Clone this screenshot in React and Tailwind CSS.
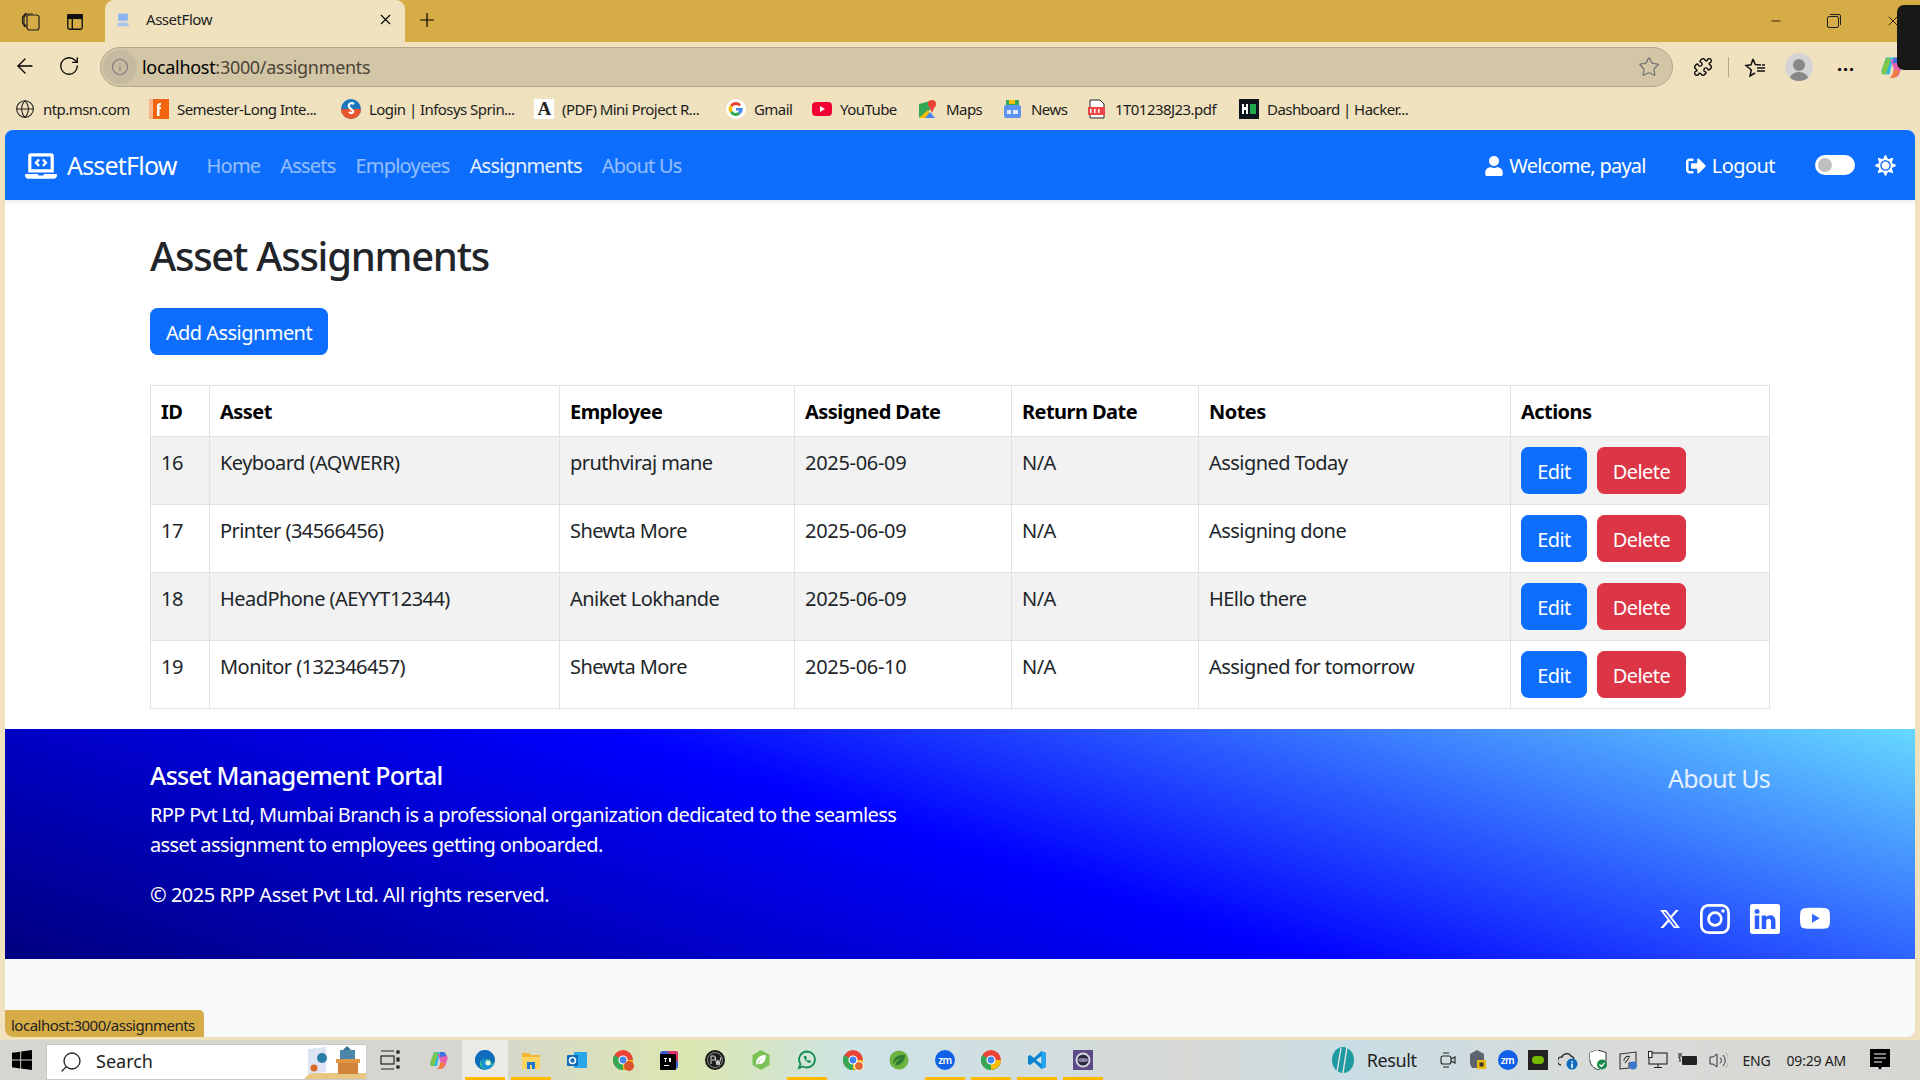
import React from 'react';
import { ArrowLeft, RotateCw, Info, Star, Puzzle, Plus, X, Minus, Search, Globe } from 'lucide-react';
import { FaUser, FaSignOutAlt, FaSun, FaLaptopCode } from 'react-icons/fa';
import { BsTwitterX, BsInstagram, BsLinkedin, BsYoutube, BsWindows } from 'react-icons/bs';

const rows = [
  { id: 16, asset: 'Keyboard (AQWERR)', employee: 'pruthviraj mane', date: '2025-06-09', notes: 'Assigned Today' },
  { id: 17, asset: 'Printer (34566456)', employee: 'Shewta More', date: '2025-06-09', notes: 'Assigning done' },
  { id: 18, asset: 'HeadPhone (AEYYT12344)', employee: 'Aniket Lokhande', date: '2025-06-09', notes: 'HEllo there' },
  { id: 19, asset: 'Monitor (132346457)', employee: 'Shewta More', date: '2025-06-10', notes: 'Assigned for tomorrow' },
];

const Ic = ({ children, className = 'w-5 h-5' }) => (
  <svg viewBox="0 0 20 20" className={`${className} shrink-0`}>{children}</svg>
);

const Chrome = ({ className }) => (
  <Ic className={className}>
    <circle cx="10" cy="10" r="10" fill="#ea4335" />
    <path d="M10 10 1.300 15A10 10 0 0 1 1.300 5Z" fill="#34a853" />
    <path d="M10 10 1.300 15A10 10 0 0 0 18.700 15Z" fill="#34a853" />
    <path d="M10 10 20 10A10 10 0 0 1 10 20L10 10Z" fill="#fbbc04" />
    <circle cx="10" cy="10" r="4.600" fill="#fff" />
    <circle cx="10" cy="10" r="3.400" fill="#4285f4" />
  </Ic>
);

const CopilotIcon = ({ className }) => (
  <Ic className={className}>
    <path d="M5 2h6l-3 14H3C1 16 1 14 1.500 12Z" fill="#2fb5e8" />
    <path d="M1.500 12C3 8 4 3 7 2c2 0 2 2 1 5l-3 9H3C1 16 1 14 1.500 12Z" fill="#7cc84a" />
    <path d="M9 4h6c3 0 4 3 3.500 5L16 16c-1 2-3 3-5 3H8c2-1 3-4 3.500-7Z" fill="#e45fae" />
    <path d="M11 2h3c2 0 3 2 3 4l-6 1Z" fill="#3f6fe0" />
    <path d="M8 19c2-1 3-4 4-7l4 1c-1 4-3 6-5 6Z" fill="#f2803a" />
  </Ic>
);

const bookmarks = [
  { label: 'ntp.msn.com', w: 'w-[134px]', icon: <Globe className="w-5 h-5 text-[#222]" strokeWidth={1.3} /> },
  {
    label: 'Semester-Long Inte...', w: 'w-[192px]',
    icon: <Ic><rect width="20" height="20" fill="#f4640f" /><rect width="4" height="20" fill="#f9b58c" /><path d="M8 17V7c0-2 1-3 4-3v2c-1 0-1.500 0-1.500 1v1H12v2h-1.500v7Z" fill="#fff" /></Ic>,
  },
  {
    label: 'Login | Infosys Sprin...', w: 'w-[193px]',
    icon: <Ic><circle cx="10" cy="10" r="10" fill="#1b76bc" /><path d="M0 10a10 10 0 0 0 20 0Z" fill="#e9552b" /><path d="M13 5c-3-2-6 0-5 3l4 4c1 2-2 3-4 1" fill="none" stroke="#fff" strokeWidth="2.200" /></Ic>,
  },
  {
    label: '(PDF) Mini Project R...', w: 'w-[192px]',
    icon: <span className="w-5 h-5 bg-white flex items-center justify-center font-['Liberation_Serif',serif] font-bold text-[19px] text-[#222] shrink-0">A</span>,
  },
  {
    label: 'Gmail', w: 'w-[86px]',
    icon: <Ic><circle cx="10" cy="10" r="10" fill="#fff" /><path d="M15 5.500A7 7 0 0 0 4 6l2.500 2A4 4 0 0 1 13 7.500Z" fill="#ea4335" /><path d="M4 6a7 7 0 0 0 0 8l2.500-2a4 4 0 0 1 0-4Z" fill="#fbbc04" /><path d="M4 14a7 7 0 0 0 10.500 1L12 13a4 4 0 0 1-5.500-1Z" fill="#34a853" /><path d="M16.500 9H10v2.500h3.500A4 4 0 0 1 12 13l2.500 2c2-2 2.500-4 2-6Z" fill="#4285f4" /></Ic>,
  },
  {
    label: 'YouTube', w: 'w-[106px]',
    icon: <Ic><rect y="3" width="20" height="14" rx="4" fill="#f00033" /><path d="M8 7v6l5-3Z" fill="#fff" /></Ic>,
  },
  {
    label: 'Maps', w: 'w-[85px]',
    icon: <Ic><path d="M1 5l11-3v9L1 19Z" fill="#34a853" /><path d="M1 19l9-8 6 8Z" fill="#fbbc04" /><path d="M7 19l5-6 5 6Z" fill="#4285f4" /><circle cx="14" cy="5" r="4" fill="#ea4335" /><path d="M11 7l3 7 3-7Z" fill="#ea4335" /></Ic>,
  },
  {
    label: 'News', w: 'w-[84px]',
    icon: <Ic><rect x="3" y="1" width="13" height="8" rx="1" fill="#34a853" /><rect x="6" y="1" width="6" height="4" fill="#fbbc04" /><rect x="1" y="6" width="17" height="13" rx="2" fill="#5b93ee" /><rect x="4" y="11" width="4" height="4" fill="#dfe9fb" /><rect x="10" y="11" width="5" height="4" fill="#dfe9fb" /></Ic>,
  },
  {
    label: '1T01238J23.pdf', w: 'w-[152px]',
    icon: <Ic><path d="M3 1h10l4 4v14H3Z" fill="#fff" stroke="#222" strokeWidth="1" /><rect x="1" y="8" width="17" height="8" fill="#ef4444" /><path d="M3 14v-4h1.500v4Zm4 0v-4h1.500v4Zm4 0v-4h1.500v4Z" fill="#fff" /></Ic>,
  },
  {
    label: 'Dashboard | Hacker...', w: 'w-[170px]',
    icon: <Ic><rect width="20" height="20" fill="#0e141e" /><path d="M3 5h2v3h2V5h2v10H7v-4H5v4H3Z" fill="#fff" /><rect x="11" y="5" width="6" height="10" fill="#1ba94c" /></Ic>,
  },
];

const taskIcons = [
  { icon: <CopilotIcon className="w-5 h-5" /> },
  {
    on: true, active: true,
    icon: <Ic><circle cx="10" cy="10" r="10" fill="#1a8fd8" /><path d="M20 10c0 3-2 5-5 5-4 0-6-3-4-5 1-1 3-1 3 0-1-3-7-3-8 1C5 16 9 20 13 19.500 4 19 0 13 2 7" fill="#3ad06e" /><path d="M5 12c1-3 5-4 8-3 3 1 4 3 3 5 2 0 4-2 4-4C20 5 15 0 10 0 4 0 0 5 0 10c0 6 6 10 11 10-4-1-7-4-6-8Z" fill="#0f6cbd" /><circle cx="13" cy="13" r="2.500" fill="#eef2ee" /></Ic>,
  },
  {
    on: true,
    icon: <Ic><path d="M1 3h7l2 2h9v5H1Z" fill="#f3b72f" /><rect x="1" y="7" width="18" height="12" fill="#fcd462" /><path d="M6 19v-7h8v7h-3v-4H9v4Z" fill="#1b78d0" /></Ic>,
  },
  {
    icon: <Ic><rect x="7" y="2" width="13" height="16" rx="1" fill="#28a8ea" /><rect x="0" y="5" width="11" height="11" rx="1" fill="#0f6cbd" /><circle cx="5.500" cy="10.500" r="3" fill="none" stroke="#fff" strokeWidth="1.600" /></Ic>,
  },
  {
    icon: <span className="relative"><Chrome className="w-5 h-5" /><span className="absolute -right-px -bottom-px w-2.5 h-2.5 rounded-full bg-[#d9542b]" /></span>,
  },
  {
    icon: <Ic><rect x="1" y="1" width="18" height="18" rx="3" fill="#3b5bd9" /><path d="M8 1h9a2 2 0 0 1 2 2v9Z" fill="#e0306f" /><rect x="1" y="4" width="16" height="16" rx="1" fill="#000" /><path d="M5 8h3v1H7v3H6V9H5Zm5 0h2v4h-2ZM5 15h5v1H5Z" fill="#fff" /></Ic>,
  },
  {
    icon: <Ic><circle cx="10" cy="10" r="10" fill="#1a1a1a" /><circle cx="10" cy="10" r="7.500" fill="none" stroke="#aaa" strokeWidth=".8" /><path d="M6 14V6h3c2 0 2 4 0 4H7m3-3 2 8 1-5 1 5 2-8" fill="none" stroke="#ddd" strokeWidth="1" /></Ic>,
  },
  {
    icon: <Ic><path d="M10 0l8.500 5v10L10 20l-8.500-5V5Z" fill="#79c257" /><path d="M5 14C5 8 9 5 15 5c0 6-3 10-8 9 1-3 3-5 5-6-3 1-5 3-6 7Z" fill="#fff" /></Ic>,
  },
  {
    on: true,
    icon: <Ic><path d="M10 1.500a8 8 0 0 1 0 16c-1.500 0-3-.4-4-1l-4 1.500 1.500-4a8 8 0 0 1 6.500-12.500Z" fill="none" stroke="#128c4f" strokeWidth="1.800" /><path d="M7 6c-1 2 3 7 6 7l1-2-2-1-1 1-2-2 1-1-1-2Z" fill="#128c4f" /></Ic>,
  },
  {
    icon: <span className="relative"><Chrome className="w-5 h-5" /><span className="absolute -right-px -bottom-px w-2.5 h-2.5 rounded-full bg-[#e2682f] border border-white" /></span>,
  },
  {
    icon: <Ic><circle cx="10" cy="10" r="9.500" fill="#6db33f" /><path d="M4 14C4 8 9 4 16 5c0 6-4 11-10 10 1-3 3-5 6-7-3 1-6 3-8 6Z" fill="#2f7d32" /></Ic>,
  },
  {
    on: true,
    icon: <span className="w-5 h-5 rounded-full bg-[#1160e8] text-white text-[10px] font-semibold flex items-center justify-center">zm</span>,
  },
  { on: true, icon: <Chrome className="w-5 h-5" /> },
  {
    on: true,
    icon: <Ic><path d="M14.500 1 7 8 3 5 1 6v8l2 1 4-3 7.500 7L19 17V3Z" fill="#0a84d0" /><path d="M14.500 6v8L9 10Z" fill="#d6e6ea" /><path d="M14.500 1 19 3v14l-4.500 2Z" fill="#24a6ec" /></Ic>,
  },
  {
    on: true,
    icon: <Ic><rect width="20" height="20" fill="#5c4a86" /><circle cx="10" cy="10" r="7.500" fill="#d8d4e0" /><circle cx="10" cy="10" r="5.500" fill="#2a2a3c" /><ellipse cx="10" cy="10" rx="5" ry="2" fill="#8a84a8" /></Ic>,
  },
];

const trayIcons = [
  <svg key="cam" viewBox="0 0 20 20" className="w-5 h-5" fill="none" stroke="#222" strokeWidth="1.100"><rect x="3" y="6" width="10" height="8" rx="2" /><path d="M13 9l4-2v6l-4-2M5 3h6M5 17h6" /></svg>,
  <svg key="chip" viewBox="0 0 20 20" className="w-5 h-5"><path d="M9 0l7 4v6l-3 8H4l-2-4V4Z" fill="#5d6470" /><rect x="9" y="10" width="9" height="9" fill="#e8b90c" /><rect x="11.500" y="12.500" width="4" height="4" fill="#333" /></svg>,
  <span key="zm" className="w-5 h-5 rounded-full bg-[#1160e8] text-white text-[10px] font-semibold flex items-center justify-center">zm</span>,
  <span key="nv" className="w-5 h-5 bg-[#222] flex items-center justify-center"><span className="w-3 h-2 rounded-full bg-[#76b900]" /></span>,
  <svg key="cloud" viewBox="0 0 20 20" className="w-5 h-5"><path d="M3 15a4 4 0 0 1 1-8 5 5 0 0 1 9-1 4 4 0 0 1 3 3" fill="#d8d8d8" stroke="#333" strokeWidth="1.500" /><circle cx="14" cy="14" r="5.500" fill="#0f6cbd" /><path d="M13.200 11h1.600v1.400h-1.600Zm0 2.400h1.600V18h-1.600Z" fill="#fff" /></svg>,
  <svg key="shield" viewBox="0 0 20 20" className="w-5 h-5"><path d="M10 0l8 2.500V10c0 5-4 8-8 10-4-2-8-5-8-10V2.500Z" fill="#fff" stroke="#333" strokeWidth="1" /><path d="M10 0v10H2V2.500Z" fill="#fff" /><circle cx="14" cy="14.500" r="5" fill="#17894a" /><path d="M11.500 14.500l2 2 3-3.500" stroke="#fff" strokeWidth="1.200" fill="none" /></svg>,
  <svg key="sync" viewBox="0 0 20 20" className="w-5 h-5" fill="none" stroke="#333" strokeWidth="1.100"><path d="M2 4l16-2v11H11v5l-9 1Z" /><path d="M6 11a4 4 0 0 1 6-4M7 13l4-5" /><circle cx="15" cy="15.500" r="4" fill="#3c78c8" stroke="none" /></svg>,
  <svg key="monitor" viewBox="0 0 20 20" className="w-5 h-5" fill="none" stroke="#222" strokeWidth="1.100"><rect x="1" y="3" width="18" height="11" /><path d="M10 14v3M6 17.500h8" /><rect x="0.500" y="1.500" width="3.500" height="6" fill="#fff" /></svg>,
  <svg key="battery" viewBox="0 0 20 20" className="w-5 h-5"><rect x="4" y="6" width="15" height="9" rx="1" fill="#222" /><path d="M1 3v4l1 2v3M3 3v4" stroke="#222" strokeWidth="1.100" fill="none" /></svg>,
  <svg key="sound" viewBox="0 0 20 20" className="w-5 h-5" fill="none" stroke="#333" strokeWidth="1"><path d="M2 7h3l4-3v13l-4-3H2Z" /><path d="M12 7.500a4 4 0 0 1 0 6M15 5a8 8 0 0 1 0 11" /><path d="M18 3a12 12 0 0 1 0 15" stroke="#aaa" /></svg>,
];

const Button = ({ children, className }) => (
  <button className={`h-[47px] pt-[2px] rounded-[7.5px] text-white text-[20px] leading-[30px] ${className}`}>{children}</button>
);

const tdClass = 'border border-[#dee2e6] pl-[10px] pr-[10px] pt-[11px] align-top';

export default function App() {
  return (
    <div className="w-[1920px] h-[1080px] overflow-hidden flex flex-col relative bg-[#f0e2be] text-[#212529] tracking-[-0.55px] font-['Noto_Sans',sans-serif]">
      {/* tab strip */}
      <div className="h-[42px] bg-[#d6ac46] flex items-end shrink-0 text-black">
        <div className="w-[105px] h-[40px] flex items-center pl-[21px] gap-[25px]">
          <svg viewBox="0 0 20 20" className="w-[20px] h-[20px]" fill="none" stroke="#222" strokeWidth="1.200"><rect x="6" y="3" width="12" height="15" rx="2.500" /><path d="M6 15 3 12V5l3-3h6M4 15 1.500 11V5L5 1" /></svg>
          <svg viewBox="0 0 20 20" className="w-[18px] h-[18px]" fill="none" stroke="#111" strokeWidth="1.500"><rect x="2" y="2" width="16" height="16" rx="2" /><rect x="2" y="2" width="16" height="4" fill="#111" /><path d="M7 6v12" /></svg>
        </div>
        <div className="w-[300px] h-[42px] bg-[#f0e2be] rounded-t-[9px] flex items-center pl-[11px] pr-[11px] pb-[3px]">
          <Ic className="w-[14px] h-[16px]"><rect x="3" y="1" width="14" height="10" fill="#8ab4f0" /><rect x="8" y="11" width="4" height="3" fill="#c4d4ee" /><rect x="2" y="14" width="16" height="5" fill="#a8c4ee" /></Ic>
          <span className="ml-[16px] text-[15px] tracking-[-0.45px] text-[#222] flex-1">AssetFlow</span>
          <X className="w-[17px] h-[17px]" strokeWidth={1.5} />
        </div>
        <div className="h-[39px] mb-[3px] flex items-center ml-[11px]">
          <Plus className="w-[22px] h-[22px]" strokeWidth={1.3} />
        </div>
        <div className="ml-auto h-[42px] flex items-center pr-[19px] gap-[44px]">
          <Minus className="w-[14px] h-[14px]" strokeWidth={1.3} />
          <svg viewBox="0 0 14 14" className="w-[14px] h-[14px]" fill="none" stroke="#222" strokeWidth="1"><rect x="0.500" y="2.500" width="11" height="11" rx="1.500" /><path d="M3 .5h9a1.500 1.500 0 0 1 1.500 1.500v9" /></svg>
          <X className="w-[16px] h-[16px]" strokeWidth={1.2} />
        </div>
      </div>

      {/* address bar */}
      <div className="h-[46px] shrink-0 flex items-center text-black pt-[2px]">
        <div className="w-[100px] flex items-center pl-[13px] gap-[21px]">
          <ArrowLeft className="w-[24px] h-[24px]" strokeWidth={1.3} />
          <RotateCw className="w-[22px] h-[22px]" strokeWidth={1.4} />
        </div>
        <div className="w-[1573px] h-[40px] mt-[2px] rounded-[20px] bg-[#d3c6a6] border border-[#b4a88c] flex items-center pr-[12px]">
          <span className="w-[34px] h-[34px] ml-[2px] rounded-full bg-[#c6baa0] flex items-center justify-center">
            <Info className="w-[18px] h-[18px] text-[#777]" strokeWidth={1.4} />
          </span>
          <span className="ml-[5px] text-[18px] tracking-[-0.3px] text-[#4a4438] flex-1"><span className="text-black">localhost</span>:3000/assignments</span>
          <Star className="w-[22px] h-[22px] text-[#777]" strokeWidth={1.4} />
        </div>
        <div className="flex-1 flex items-center mt-[2px] pl-[20px]">
          <Puzzle className="w-[20px] h-[20px]" strokeWidth={1.6} />
          <span className="w-px h-[20px] bg-[#b4a88c] ml-[15px] mr-[15px]" />
          <svg viewBox="0 0 22 20" className="w-[22px] h-[20px]" fill="none" stroke="#111" strokeWidth="1.500"><path d="M9 2l2.300 5.500 5.700.5M11 16l-5 3 1.300-6L2 8.500l5-.7L9 2M13 11h8M13 14h8M18 8h3" /></svg>
          <span className="ml-[19px] w-[28px] h-[28px] rounded-full bg-[#d4d4d4] flex flex-col items-center justify-end overflow-hidden">
            <span className="w-[12px] h-[12px] rounded-full bg-[#888] mb-[1px]" />
            <span className="w-[20px] h-[9px] rounded-t-full bg-[#888]" />
          </span>
          <span className="ml-[24px] text-[18px] leading-none tracking-[1px] -mt-[6px] font-bold">...</span>
          <CopilotIcon className="w-[24px] h-[24px] ml-[25px]" />
        </div>
      </div>

      {/* bookmarks */}
      <div className="h-[42px] shrink-0 flex items-center pl-[15px] text-[15px] tracking-[-0.55px] text-[#1c1c1c]">
        {bookmarks.map((b) => (
          <div key={b.label} className={`flex items-center gap-[8px] whitespace-nowrap shrink-0 ${b.w}`}>
            {b.icon}
            <span>{b.label}</span>
          </div>
        ))}
      </div>

      {/* page */}
      <div className="flex-1 min-h-0 ml-[5px] mr-[5px] mb-[3px] flex flex-col bg-[#f8f9fa] rounded-[8px] overflow-hidden">
        <nav className="h-[70px] shrink-0 bg-[#0d6efd] flex items-center text-[20px] pt-[1px] shadow-[0_2px_4px_rgba(0,0,0,0.08)] relative">
          <FaLaptopCode className="w-[32px] h-[30px] ml-[20px] text-white" />
          <span className="ml-[10px] text-[25px] tracking-[-0.8px] text-white">AssetFlow</span>
          <div className="ml-[30px] flex gap-[20px] tracking-[-0.8px] text-white/55">
            <span>Home</span>
            <span>Assets</span>
            <span>Employees</span>
            <span className="text-white/90">Assignments</span>
            <span>About Us</span>
          </div>
          <div className="ml-auto flex items-center text-white">
            <FaUser className="w-[18px] h-[20px]" />
            <span className="ml-[6px] tracking-[-0.75px]">Welcome, payal</span>
            <FaSignOutAlt className="w-[20px] h-[20px] ml-[40px]" />
            <span className="ml-[6px]">Logout</span>
            <span className="ml-[40px] w-[40px] h-[20px] rounded-full bg-white flex items-center pl-[3px] -mt-[2px]">
              <span className="w-[14px] h-[14px] rounded-full bg-[#bfbfbf]" />
            </span>
            <FaSun className="w-[21px] h-[21px] ml-[20px] mr-[19px]" />
          </div>
        </nav>

        <main className="h-[529px] shrink-0 bg-white pl-[145px] pr-[145px]">
          <h1 className="text-[40px] leading-[48px] font-medium tracking-[-1.25px] mt-[32px]">Asset Assignments</h1>
          <Button className="mt-[28px] w-[178px] block bg-[#0d6efd]">Add Assignment</Button>
          <table className="mt-[30px] w-[1619px] table-fixed border-collapse text-[20px] leading-[30px]">
            <colgroup>
              <col className="w-[59px]" />
              <col className="w-[350px]" />
              <col className="w-[235px]" />
              <col className="w-[217px]" />
              <col className="w-[187px]" />
              <col className="w-[312px]" />
              <col className="w-[259px]" />
            </colgroup>
            <thead>
              <tr className="h-[51px]">
                {['ID', 'Asset', 'Employee', 'Assigned Date', 'Return Date', 'Notes', 'Actions'].map((h) => (
                  <th key={h} className="border border-[#dee2e6] pl-[10px] pr-[10px] pt-[2px] text-left font-bold text-black">{h}</th>
                ))}
              </tr>
            </thead>
            <tbody>
              {rows.map((r, i) => (
                <tr key={r.id} className={`h-[68px] ${i % 2 === 0 ? 'bg-[#f2f2f2]' : 'bg-white'}`}>
                  <td className={tdClass}>{r.id}</td>
                  <td className={tdClass}>{r.asset}</td>
                  <td className={tdClass}>{r.employee}</td>
                  <td className={`${tdClass} tracking-[-0.3px]`}>{r.date}</td>
                  <td className={tdClass}>N/A</td>
                  <td className={tdClass}>{r.notes}</td>
                  <td className="border border-[#dee2e6] px-[10px] align-middle">
                    <div className="flex gap-[10px]">
                      <Button className="w-[66px] bg-[#0d6efd]">Edit</Button>
                      <Button className="w-[89px] bg-[#dc3545]">Delete</Button>
                    </div>
                  </td>
                </tr>
              ))}
            </tbody>
          </table>
        </main>

        <footer className="h-[230px] shrink-0 bg-[linear-gradient(18deg,#000080_0%,#0000ff_50%,#66d9ff_100%)] text-white pl-[145px] pr-[145px] flex justify-between">
          <div className="w-[770px] pt-[28px]">
            <h5 className="text-[25px] leading-[36px] font-medium tracking-[-0.75px]">Asset Management Portal</h5>
            <p className="mt-[7px] text-[20px] leading-[30px] tracking-[-0.62px]">RPP Pvt Ltd, Mumbai Branch is a professional organization dedicated to the seamless asset assignment to employees getting onboarded.</p>
            <p className="mt-[20px] text-[20px] leading-[30px] tracking-[-0.48px]">© 2025 RPP Asset Pvt Ltd. All rights reserved.</p>
          </div>
          <div className="flex flex-col items-end pt-[31px]">
            <span className="text-[25px] leading-[36px] tracking-[-0.7px] text-white/85">About Us</span>
            <div className="mt-[108px] -mr-[60px] flex items-center gap-[20px]">
              <BsTwitterX className="w-[20px] h-[20px]" />
              <BsInstagram className="w-[30px] h-[30px]" />
              <BsLinkedin className="w-[30px] h-[30px]" />
              <BsYoutube className="w-[30px] h-[30px]" />
            </div>
          </div>
        </footer>
        <div className="flex-1 flex items-end">
          <div className="h-[27px] w-[199px] pt-[3px] bg-[#d6ac46] rounded-tr-[5px] text-[15px] tracking-[-0.5px] text-[#222] flex items-center pl-[6px]">localhost:3000/assignments</div>
        </div>
      </div>

      {/* taskbar */}
      <div className="h-[40px] shrink-0 flex items-center bg-[linear-gradient(to_right,#d6d5d0_0%,#d6d5d0_24%,#dbe7b0_36%,#cde3e8_45%,#d6d8d4_62%,#c9dde4_70%,#d9dbd8_85%,#d7d6d2_100%)]">
        <BsWindows className="w-[20px] h-[20px] ml-[12px] text-black" />
        <div className="ml-[14px] w-[321px] h-[36px] mt-[3px] bg-white border border-[#c9c9c9] flex items-center pl-[12px] overflow-hidden">
          <Search className="w-[24px] h-[24px] -scale-x-100" strokeWidth={1.3} />
          <span className="ml-[13px] text-[18px] tracking-[0px] text-[#222]">Search</span>
          <svg viewBox="0 0 70 34" className="ml-auto w-[70px] h-[34px] shrink-0">
            <path d="M8 34 14 28H70V34Z" fill="#e9c684" />
            <path d="M12 4 30 2V27L12 29Z" fill="#dfe4f4" />
            <circle cx="26" cy="13" r="5" fill="#2a7ea8" />
            <circle cx="18" cy="23" r="3.500" fill="#d9672a" />
            <rect x="42" y="16" width="20" height="13" fill="#d2853a" />
            <rect x="40" y="14" width="24" height="4" fill="#e09645" />
            <rect x="44" y="5" width="15" height="9" fill="#4a86a8" />
            <path d="M51 1l-4 4h8Z" fill="#2f6e92" />
          </svg>
        </div>
        <div className="w-[46px] h-[40px] flex items-center justify-center">
          <svg viewBox="0 0 20 20" className="w-[20px] h-[20px]" fill="none" stroke="#222" strokeWidth="1.200"><path d="M1 1h13M1 19h13" /><rect x="1" y="6" width="13" height="8" /><rect x="17" y="1" width="2" height="2" fill="#222" /><rect x="17" y="8" width="2" height="3" fill="#222" /><rect x="17" y="16" width="2" height="2" fill="#222" /></svg>
        </div>
        <div className="flex ml-[3px]">
          {taskIcons.map((t, i) => (
            <div key={i} className={`w-[46px] h-[40px] flex items-center justify-center relative ${t.active ? 'bg-white/50' : ''}`}>
              {t.icon}
              {t.on && <span className="absolute bottom-0 left-[3px] right-[3px] h-[3px] bg-[#ffb900]" />}
            </div>
          ))}
        </div>
        <div className="ml-auto flex items-center">
          <svg viewBox="0 0 24 28" className="w-[26px] h-[28px]"><ellipse cx="12" cy="14" rx="11" ry="13" fill="#1e9aa0" /><path d="M6 26 10 2M12 27 16 1" stroke="#e6e6e6" strokeWidth="1.400" /></svg>
          <span className="ml-[11px] text-[18px] tracking-[-0.4px] text-[#222]">Result</span>
          <div className="ml-[21px] flex items-center gap-[10px]">{trayIcons}</div>
          <span className="ml-[15px] text-[14px] tracking-[-0.2px] text-[#222]">ENG</span>
          <span className="ml-[16px] text-[14px] tracking-[-0.2px] text-[#222]">09:29 AM</span>
          <svg viewBox="0 0 20 22" className="w-[20px] h-[22px] ml-[24px] mr-[30px]"><path d="M0 0h20v18h-8l-2 3-2-3H0Z" fill="#000" /><path d="M4 5h12M4 9h12M4 13h8" stroke="#fff" strokeWidth="1.200" /></svg>
        </div>
      </div>

      {/* overlay that sits on the window corner in the capture */}
      <div className="absolute top-[5px] left-[1897px] w-[30px] h-[65px] rounded-[7px] bg-[#181818]" />
    </div>
  );
}
